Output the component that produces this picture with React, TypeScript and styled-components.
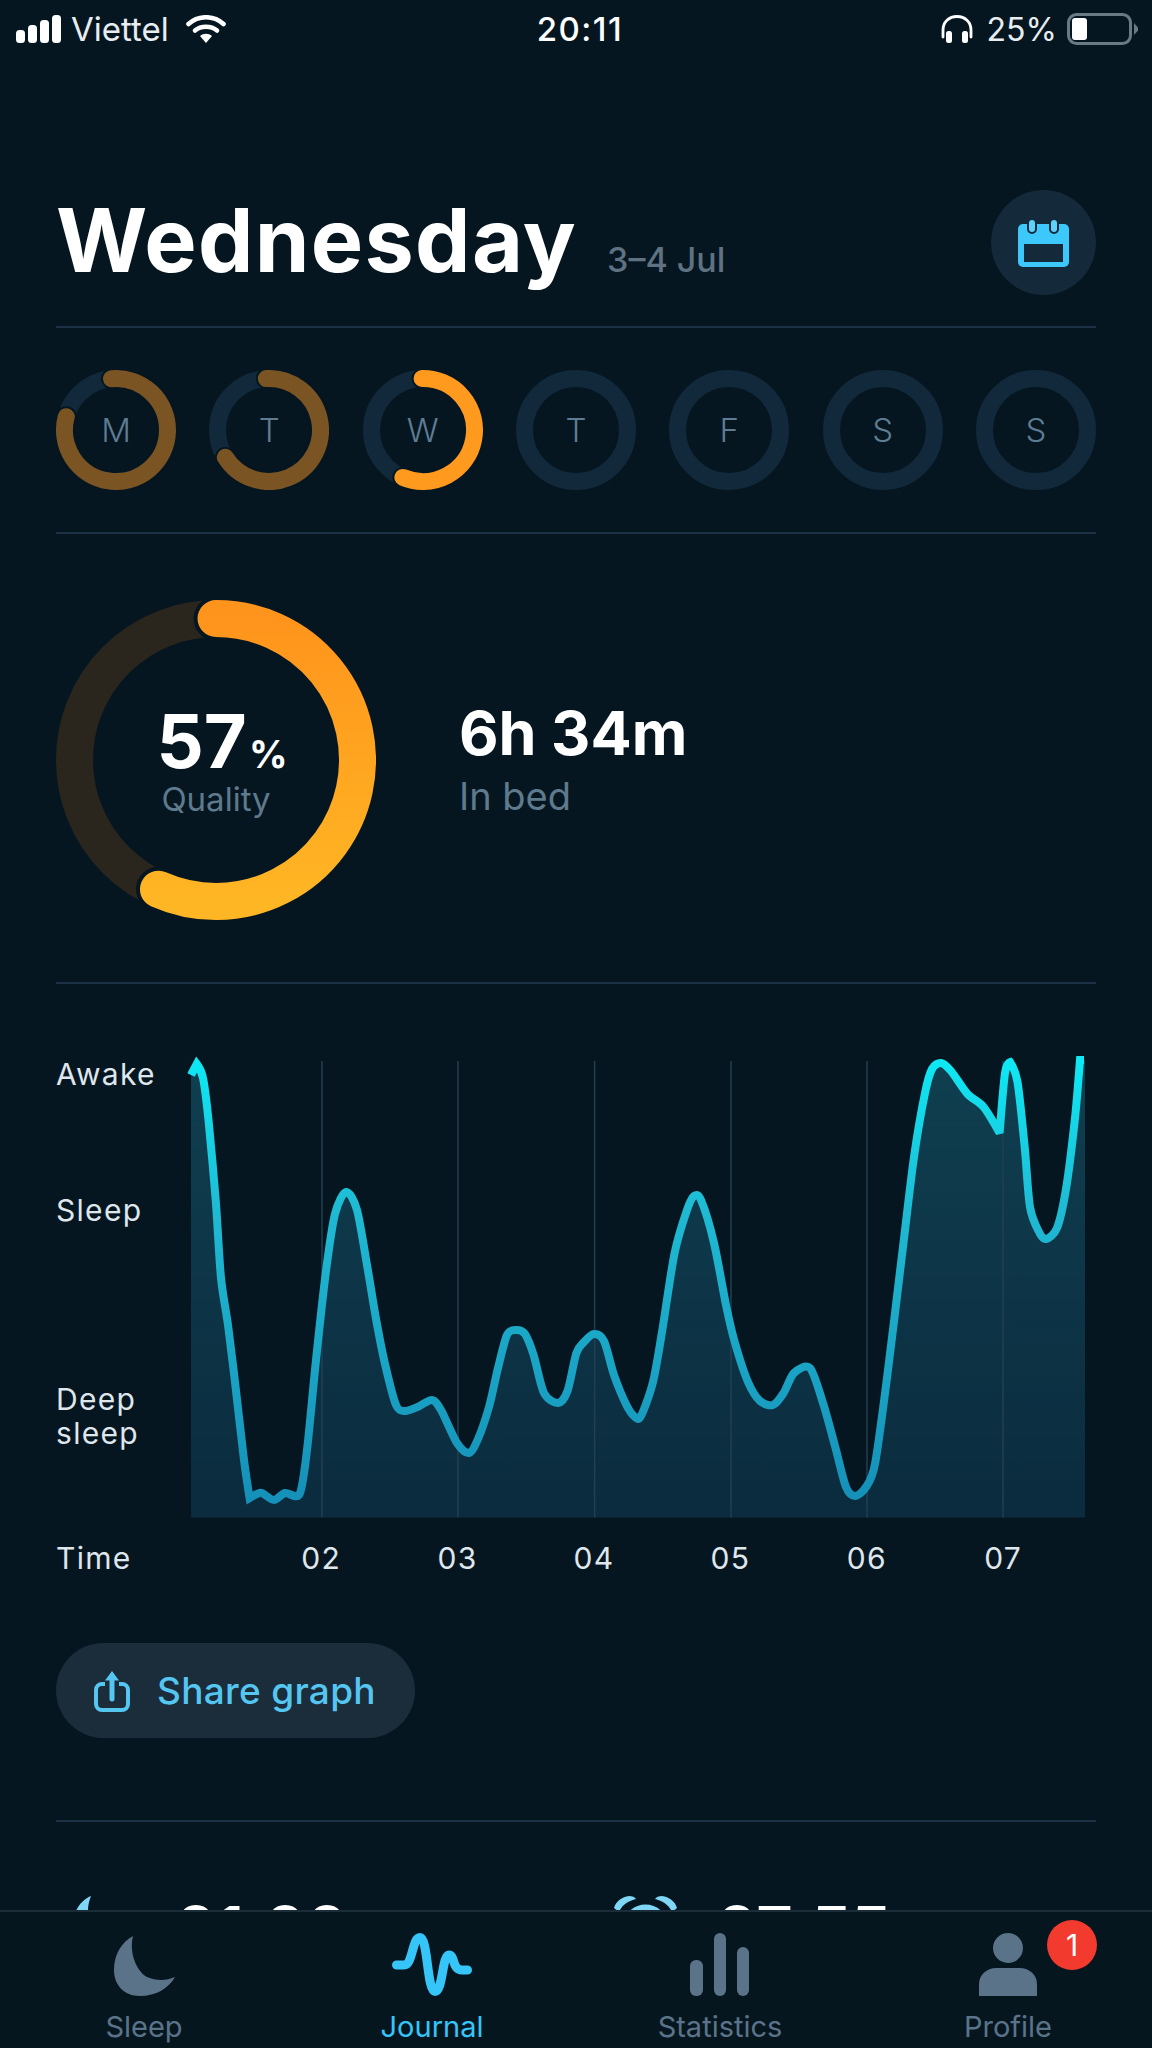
import React from "react";
import styled, { createGlobalStyle } from "styled-components";

const GlobalStyle = createGlobalStyle`
  html, body {
    margin: 0;
    padding: 0;
    background: #051621;
  }
`;

const WEEK = [
  { day: "M", sweep: 290, start: -5, color: "#7a5422" },
  { day: "T", sweep: 241, start: -3, color: "#7a5422" },
  { day: "W", sweep: 204, start: -1, color: "#ff9a1f" },
  { day: "T" },
  { day: "F" },
  { day: "S" },
  { day: "S" },
];

const HOURS = ["02", "03", "04", "05", "06", "07"];
const GRID_X = [131, 267, 403.6, 540, 676, 812];

// sleep depth samples, x/y in chart units
const SAMPLES: [number, number][] = [
  [0, 26], [5.8, 15], [12, 29], [17.6, 72], [24.7, 151], [30, 229], [37, 276], [44, 333],
  [53, 411], [58.6, 449], [66, 445], [71, 444], [83, 451], [94, 444], [108.6, 445], [116, 401], [125, 311],
  [135, 222], [144, 165], [155, 143], [166, 161], [176.5, 219], [185.4, 272], [194, 315], [205, 356],
  [214, 362], [226.5, 358], [241, 351], [250, 361], [266, 394], [278, 404], [287, 390], [298, 358],
  [307, 319], [316, 286], [325, 281], [334, 285], [342.6, 306], [353, 344], [367, 354], [376.5, 342],
  [385.4, 304], [393, 293], [403, 285], [413, 292], [423, 326], [435.4, 356], [444, 368], [450, 367],
  [462, 333], [471, 283], [483.6, 204], [496, 161], [503, 147], [510, 151], [523, 194], [535.4, 258],
  [544, 294], [557, 333], [569, 352], [582, 356], [592.6, 344], [603, 324], [619, 319], [632, 354],
  [644, 397], [655, 438], [664, 447], [675, 438], [684, 415], [696, 329], [710.4, 211], [723, 108],
  [734, 44], [741, 20], [750, 14], [760, 22], [776.5, 45], [792.6, 58], [808.6, 84], [814, 24],
  [819, 13], [826.5, 33], [833.6, 97], [839, 158], [848, 183], [855, 190], [866, 179], [875, 140],
  [884, 69], [889, 11],
];

// spots where the trace turns on a point instead of a curve
const CORNERS = [5.8, 58.6, 808.6, 819];

const smoothPath = (pts: [number, number][]) => {
  const tangent = (i: number): [number, number] => {
    if (CORNERS.includes(pts[i][0])) return [0, 0];
    const a = pts[Math.max(i - 1, 0)];
    const b = pts[Math.min(i + 1, pts.length - 1)];
    return [(b[0] - a[0]) / 7, (b[1] - a[1]) / 7];
  };
  let d = `M${pts[0][0]} ${pts[0][1]}`;
  for (let i = 0; i < pts.length - 1; i++) {
    const t1 = tangent(i);
    const t2 = tangent(i + 1);
    const c1 = `${(pts[i][0] + t1[0]).toFixed(1)} ${(pts[i][1] + t1[1]).toFixed(1)}`;
    const c2 = `${(pts[i + 1][0] - t2[0]).toFixed(1)} ${(pts[i + 1][1] - t2[1]).toFixed(1)}`;
    d += `C${c1} ${c2} ${pts[i + 1][0]} ${pts[i + 1][1]}`;
  }
  return d;
};

const arcPath = (c: number, r: number, start: number, sweep: number) => {
  const toXY = (deg: number) => {
    const a = ((deg - 90) * Math.PI) / 180;
    return `${(c + r * Math.cos(a)).toFixed(2)} ${(c + r * Math.sin(a)).toFixed(2)}`;
  };
  return `M${toXY(start)}A${r} ${r} 0 ${sweep > 180 ? 1 : 0} 1 ${toXY(start + sweep)}`;
};

const Ring: React.FC<{
  size: number;
  width: number;
  track: string;
  start?: number;
  sweep?: number;
  color?: string;
  halo: number;
}> = ({ size, width, track, start = 0, sweep, color, halo }) => {
  const c = size / 2;
  const r = c - width / 2;
  return (
    <svg width={size} height={size} viewBox={`0 0 ${size} ${size}`}>
      <circle cx={c} cy={c} r={r} fill="none" stroke={track} strokeWidth={width} />
      {sweep && (
        <>
          <path d={arcPath(c, r, start, sweep)} fill="none" stroke="#051621" strokeWidth={width + halo} strokeLinecap="round" />
          <path d={arcPath(c, r, start, sweep)} fill="none" stroke={color} strokeWidth={width} strokeLinecap="round" />
        </>
      )}
    </svg>
  );
};

const App: React.FC = () => {
  const line = smoothPath(SAMPLES);
  return (
    <Page>
      <GlobalStyle />
      <StatusBar>
        <StatusSide>
          <svg width="45" height="28" viewBox="0 0 45 28" fill="#fff">
            <rect x="0" y="15" width="9" height="13" rx="3.500" />
            <rect x="12" y="10" width="9" height="18" rx="3.500" />
            <rect x="24" y="5" width="9" height="23" rx="3.500" />
            <rect x="36" y="0" width="9" height="28" rx="3.500" />
          </svg>
          <Carrier>Viettel</Carrier>
          <svg width="40" height="28" viewBox="0 0 40 28" fill="none" stroke="#fff" strokeWidth="4.600" strokeLinecap="round">
            <path d="M2.500 9C12.500 0 27.500 0 37.500 9" />
            <path d="M9 15.500C15 10.500 25 10.500 31 15.500" />
            <path d="M20 28L14 21C17.500 18 22.500 18 26 21Z" fill="#fff" stroke="none" />
          </svg>
        </StatusSide>
        <Clock>20:11</Clock>
        <StatusSide>
          <svg width="32" height="28" viewBox="0 0 32 28" fill="none">
            <path d="M2 22V15C2 7 8 1.500 16 1.500S30 7 30 15V22" stroke="#fff" strokeWidth="2.800" strokeLinecap="round" />
            <rect x="5" y="16" width="6" height="12" rx="2.500" fill="#fff" />
            <rect x="21" y="16" width="6" height="12" rx="2.500" fill="#fff" />
          </svg>
          <BatteryText>25%</BatteryText>
          <svg width="71" height="32" viewBox="0 0 71 32" fill="none">
            <rect x="1.500" y="1.500" width="62" height="29" rx="8" stroke="#6a7a84" strokeWidth="3" />
            <rect x="5" y="5" width="15" height="22" rx="3" fill="#fff" />
            <path d="M67 10L71 14.500V17.500L67 22Z" fill="#6a7a84" />
          </svg>
        </StatusSide>
      </StatusBar>

      <Content>
        <TitleRow>
          <TitleText>
            <Title>Wednesday</Title>
            <DateRange>3–4 Jul</DateRange>
          </TitleText>
          <CalendarButton>
            <svg width="51" height="49" viewBox="0 0 51 49">
              <rect x="0" y="6" width="51" height="43" rx="5" fill="#3cc8fb" />
              <rect x="6" y="26" width="39" height="18" fill="#14293a" />
              <rect x="10" y="1" width="8" height="14" rx="4" fill="#5fd2fb" stroke="#14293a" strokeWidth="2" />
              <rect x="32" y="1" width="8" height="14" rx="4" fill="#5fd2fb" stroke="#14293a" strokeWidth="2" />
            </svg>
          </CalendarButton>
        </TitleRow>
        <Divider $top={31} />

        <WeekRow>
          {WEEK.map((d, i) => (
            <DayRing key={i}>
              <Ring size={120} width={17} track="#11293a" start={d.start} sweep={d.sweep} color={d.color} halo={4} />
              <DayLetter>{d.day}</DayLetter>
            </DayRing>
          ))}
        </WeekRow>
        <Divider $top={42} />

        <Summary>
          <QualityRing>
            <svg width="320" height="320" viewBox="0 0 320 320">
              <defs>
                <linearGradient id="qualityArc" x1="0" y1="0" x2="0" y2="1">
                  <stop offset="0" stopColor="#ff941c" />
                  <stop offset="1" stopColor="#ffb624" />
                </linearGradient>
              </defs>
              <circle cx="160" cy="160" r="141.500" fill="none" stroke="#2a261d" strokeWidth="37" />
              <path d={arcPath(160, 141.5, 0, 204)} fill="none" stroke="#051621" strokeWidth="45" strokeLinecap="round" />
              <path d={arcPath(160, 141.5, 0, 204)} fill="none" stroke="url(#qualityArc)" strokeWidth="37" strokeLinecap="round" />
            </svg>
            <QualityValue>
              <Percent>
                57<small>%</small>
              </Percent>
              <Caption>Quality</Caption>
            </QualityValue>
          </QualityRing>
          <InBed>
            <Duration>6h 34m</Duration>
            <InBedLabel>In bed</InBedLabel>
          </InBed>
        </Summary>
        <Divider $top={62} />

        <ChartBody>
          <AxisLabels>
            <AxisLabel $top={8}>Awake</AxisLabel>
            <AxisLabel $top={102}>Sleep</AxisLabel>
            <AxisLabel $top={155}>
              Deep
              <br />
              sleep
            </AxisLabel>
          </AxisLabels>
          <ChartSvg width="905" height="470" viewBox="0 0 905 470">
            <defs>
              <linearGradient id="depthLine" gradientUnits="userSpaceOnUse" x1="0" y1="10" x2="0" y2="455">
                <stop offset="0" stopColor="#0ee9f5" />
                <stop offset="0.35" stopColor="#1fb9d2" />
                <stop offset="1" stopColor="#1590b8" />
              </linearGradient>
              <linearGradient id="depthFill" gradientUnits="userSpaceOnUse" x1="0" y1="10" x2="0" y2="468">
                <stop offset="0" stopColor="#0f3f50" />
                <stop offset="1" stopColor="#0b2b3e" />
              </linearGradient>
            </defs>
            <path d={`${line}L894 11L894 468.500L0 468.500Z`} fill="url(#depthFill)" />
            {GRID_X.map((x) => (
              <line key={x} x1={x} x2={x} y1="12" y2="468.500" stroke="#233f51" strokeWidth="1.500" />
            ))}
            <path d={`${line}L893 11`} fill="none" stroke="url(#depthLine)" strokeWidth="8" strokeLinejoin="miter" strokeMiterlimit="3" />
          </ChartSvg>
        </ChartBody>

        <TimeRow>
          <TimeLabel>Time</TimeLabel>
          {HOURS.map((h) => (
            <HourLabel key={h}>{h}</HourLabel>
          ))}
        </TimeRow>

        <ShareButton>
          <svg width="36" height="42" viewBox="0 0 36 42" fill="none" stroke="#55c6f0" strokeWidth="4">
            <path d="M11 14H8A6 6 0 0 0 2 20V34A6 6 0 0 0 8 40H28A6 6 0 0 0 34 34V20A6 6 0 0 0 28 14H25" />
            <path d="M18 29V6" strokeWidth="5" strokeLinecap="round" />
            <path d="M11 10.500L18 1L25 10.500Z" fill="#55c6f0" stroke="none" />
          </svg>
          Share graph
        </ShareButton>
        <Divider $top={82} />

        <StatsRow>
          <StatCell $width={556}>
            <StatIcon $width={119} $inset={17}>
              <svg width="60" height="60" viewBox="0 0 60 60">
                <path d="M18 0C8 4 2 14 0 24C-2 42 12 60 34 60C46 60 54 54 60 44C42 50 22 40 16 24C14 14 15 8 18 0Z" fill="#7fd6f5" />
              </svg>
            </StatIcon>
            <StatTime>01:00</StatTime>
          </StatCell>
          <StatCell>
            <StatIcon $width={104} $inset={2}>
              <svg width="63" height="60" viewBox="0 0 63 60" fill="#7fd6f5">
                <path d="M0 12C2 5 8 1 15 0C18 0 21 1 22 3C14 5 8 9 5 16Z" />
                <path d="M63 12C61 5 55 1 48 0C45 0 42 1 41 3C49 5 55 9 58 16Z" />
                <circle cx="31.500" cy="31" r="19" fill="none" stroke="#7fd6f5" strokeWidth="7" />
              </svg>
            </StatIcon>
            <StatTime>07:55</StatTime>
          </StatCell>
        </StatsRow>
      </Content>

      <TabBar>
        <Tab>
          <TabIcon>
            <svg width="61" height="60" viewBox="0 0 61 60" fill="#5b7389">
              <path d="M19 0C8 6 0 18 0 34C0 49 10 60 26 60C42 60 55 52 61 41C52 45 42 45 33 41C22 35 15 16 19 0Z" />
            </svg>
          </TabIcon>
          <TabLabel>Sleep</TabLabel>
        </Tab>
        <Tab>
          <TabIcon>
            <svg width="80" height="63" viewBox="0 0 80 63" fill="none" stroke="#36c5f8" strokeWidth="9" strokeLinecap="round">
              <path d="M4.500 32H12C21 32 20 4.500 28 4.500C36 4.500 35 58.500 43 58.500C51 58.500 50 22 57 22C63 22 60 37 70 37H75.500" />
            </svg>
          </TabIcon>
          <TabLabel $active>Journal</TabLabel>
        </Tab>
        <Tab>
          <TabIcon>
            <svg width="60" height="63" viewBox="0 0 60 63" fill="#5b7389">
              <rect x="0" y="27" width="13" height="36" rx="6" />
              <rect x="24" y="0" width="12" height="63" rx="6" />
              <rect x="47" y="14" width="12" height="49" rx="6" />
            </svg>
          </TabIcon>
          <TabLabel>Statistics</TabLabel>
        </Tab>
        <Tab>
          <TabIcon>
            <svg width="58" height="63" viewBox="0 0 58 63" fill="#5b7389">
              <ellipse cx="29" cy="15" rx="15" ry="15" />
              <path d="M0 63V51C0 41 9 35 17 35H41C49 35 58 41 58 51V63Z" />
            </svg>
            <Badge>1</Badge>
          </TabIcon>
          <TabLabel>Profile</TabLabel>
        </Tab>
      </TabBar>
    </Page>
  );
};

export default App;

const Page = styled.div`
  display: flex;
  flex-direction: column;
  width: 1152px;
  height: 2048px;
  overflow: hidden;
  background: #051621;
  font-family: Inter, "Liberation Sans", sans-serif;
  color: #fff;
`;

const StatusBar = styled.div`
  display: flex;
  flex: none;
  align-items: center;
  justify-content: space-between;
  height: 58px;
  padding: 0 14px 0 16px;
`;

const StatusSide = styled.div`
  display: flex;
  align-items: center;
  gap: 10px;
  min-width: 210px;
  &:last-child {
    justify-content: flex-end;
    gap: 12px;
  }
`;

const Carrier = styled.span`
  margin-right: 7px;
  font-size: 33px;
  color: #e8edf0;
`;

const Clock = styled.span`
  margin-left: 6px;
  font-size: 33px;
  font-weight: 500;
  letter-spacing: 1.500px;
`;

const BatteryText = styled.span`
  margin: 0 -2px 0 2px;
  font-size: 32px;
  color: #e8edf0;
`;

const Content = styled.main`
  flex: 1;
  min-height: 0;
  overflow: hidden;
  padding: 0 56px;
`;

const TitleRow = styled.header`
  display: flex;
  align-items: center;
  justify-content: space-between;
  height: 106px;
  margin-top: 131px;
`;

const TitleText = styled.div`
  display: flex;
  align-items: baseline;
  gap: 30px;
  padding-bottom: 4px;
`;

const Title = styled.h1`
  margin: 0;
  font-size: 88px;
  font-weight: 700;
  letter-spacing: 1.300px;
  line-height: 1;
`;

const DateRange = styled.span`
  font-size: 34px;
  font-weight: 500;
  color: #5f7282;
`;

const CalendarButton = styled.div`
  display: flex;
  align-items: center;
  justify-content: center;
  width: 105px;
  height: 105px;
  border-radius: 50%;
  background: #14293a;
`;

const Divider = styled.hr<{ $top: number }>`
  height: 2px;
  margin: ${(p) => p.$top}px 0 0;
  border: 0;
  background: #1c3244;
`;

const WeekRow = styled.div`
  display: flex;
  justify-content: space-between;
  margin-top: 42px;
`;

const DayRing = styled.div`
  position: relative;
  width: 120px;
  height: 120px;
  svg {
    display: block;
  }
`;

const DayLetter = styled.span`
  position: absolute;
  inset: 0;
  display: flex;
  align-items: center;
  justify-content: center;
  font-size: 33px;
  font-weight: 300;
  color: #5f7d92;
`;

const Summary = styled.section`
  display: flex;
  align-items: center;
  gap: 83px;
  margin-top: 66px;
`;

const QualityRing = styled.div`
  position: relative;
  width: 320px;
  height: 320px;
  svg {
    display: block;
  }
`;

const QualityValue = styled.div`
  position: absolute;
  inset: 0;
  display: flex;
  flex-direction: column;
  align-items: center;
  justify-content: center;
`;

const Percent = styled.div`
  margin: 0 0 -11px 12px;
  font-size: 74px;
  font-weight: 700;
  line-height: 76px;
  small {
    margin-left: 2px;
    font-size: 38px;
  }
`;

const Caption = styled.div`
  font-size: 33px;
  line-height: 36px;
  color: #5f7a8c;
`;

const InBed = styled.div`
  display: flex;
  flex-direction: column;
  padding-bottom: 4px;
`;

const Duration = styled.div`
  font-size: 61px;
  font-weight: 700;
  line-height: 72px;
`;

const InBedLabel = styled.div`
  margin-top: 4px;
  font-size: 38px;
  line-height: 46px;
  color: #5f7a8c;
`;

const ChartBody = styled.section`
  display: flex;
  margin-top: 65px;
`;

const AxisLabels = styled.div`
  display: flex;
  flex: none;
  flex-direction: column;
  width: 135px;
`;

const AxisLabel = styled.div<{ $top: number }>`
  margin-top: ${(p) => p.$top}px;
  font-size: 30px;
  letter-spacing: 1.300px;
  line-height: 34px;
  color: #dfe6ec;
`;

const ChartSvg = styled.svg`
  display: block;
  flex: none;
  overflow: visible;
`;

const TimeRow = styled.div`
  display: flex;
  margin-top: 22px;
  font-size: 30px;
  letter-spacing: 1.300px;
  line-height: 34px;
  color: #dfe6ec;
`;

const TimeLabel = styled.div`
  width: 197px;
`;

const HourLabel = styled.div`
  width: 136.400px;
  text-align: center;
`;

const ShareButton = styled.button`
  display: flex;
  align-items: center;
  gap: 27px;
  width: 359px;
  height: 95px;
  margin-top: 68px;
  padding: 0 0 0 38px;
  border: 0;
  border-radius: 48px;
  background: #1b2c3b;
  font-family: inherit;
  font-size: 37px;
  font-weight: 500;
  letter-spacing: 0.300px;
  color: #55c6f0;
`;

const StatsRow = styled.div`
  display: flex;
  margin-top: 71px;
`;

const StatCell = styled.div<{ $width?: number }>`
  display: flex;
  align-items: flex-start;
  width: ${(p) => (p.$width ? `${p.$width}px` : "auto")};
`;

const StatIcon = styled.div<{ $width: number; $inset: number }>`
  width: ${(p) => p.$width}px;
  padding: 3px 0 0 ${(p) => p.$inset}px;
  box-sizing: border-box;
`;

const StatTime = styled.div`
  font-size: 62px;
  font-weight: 700;
  line-height: 72px;
`;

const TabBar = styled.nav`
  display: grid;
  flex: none;
  grid-template-columns: repeat(4, 288px);
  height: 138px;
  box-sizing: border-box;
  padding-top: 21px;
  border-top: 2px solid #1c2d3a;
  background: #06161f;
`;

const Tab = styled.div`
  display: flex;
  flex-direction: column;
  align-items: center;
`;

const TabIcon = styled.div`
  position: relative;
  display: flex;
  align-items: flex-end;
  height: 63px;
  svg {
    display: block;
  }
`;

const TabLabel = styled.span<{ $active?: boolean }>`
  margin-top: 13px;
  font-size: 29px;
  line-height: 36px;
  color: ${(p) => (p.$active ? "#36c5f8" : "#5b7389")};
`;

const Badge = styled.span`
  position: absolute;
  top: -13px;
  left: 68px;
  display: flex;
  align-items: center;
  justify-content: center;
  width: 50px;
  height: 50px;
  border-radius: 50%;
  background: #f33a2e;
  font-size: 30px;
  color: #fff;
`;
